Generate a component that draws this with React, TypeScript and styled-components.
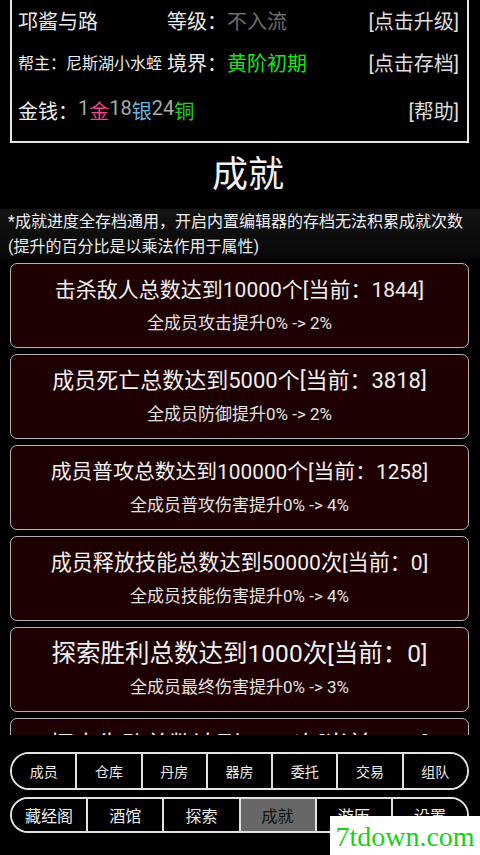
import styled, { createGlobalStyle } from "styled-components";

const GlobalStyle = createGlobalStyle`
    html, body {
        margin: 0;
        padding: 0;
        background: #000;
    }

    body {
        font-family: "Roboto", "Noto Sans CJK SC", sans-serif;
        color: #eee;
    }
`

const Screen = styled.div`
    width: 480px;
    height: 855px;
    background: #000;
    position: relative;
    overflow: hidden;
    display: flex;
    flex-direction: column;
`

const InfoBox = styled.div`
    margin: 0 11px 0 10px;
    height: 141px;
    border: 2px solid #e6e6e6;
    border-top: none;
    display: grid;
    grid-template-columns: 149px 1fr auto;
    grid-template-rows: 40px 44px 52px;
    padding: 0 8px 0 6px;
    align-items: center;
`

const InfoText = styled.span<{ $size?: number; $color?: string }>`
    font-size: ${(p) => p.$size ?? 20}px;
    color: ${(p) => p.$color ?? "#eaeaea"};
    white-space: nowrap;
`

const InfoAction = styled(InfoText)`
    justify-self: end;
    color: #dcdcdc;
`

const MoneyCell = styled.div`
    grid-column: 1 / 3;
    font-size: 20px;
    display: flex;
    white-space: nowrap;
`

const Coin = styled.span<{ $color: string }>`
    color: ${(p) => p.$color};
`

const PageTitle = styled.h1`
    margin: 0;
    height: 66px;
    line-height: 64px;
    padding-left: 16px;
    text-align: center;
    font-size: 36px;
    font-weight: 400;
    color: #f2f2f2;
`

const Note = styled.p`
    margin: 0;
    padding: 0 8px;
    font-size: 16px;
    line-height: 25px;
    color: #ececec;
    background: linear-gradient(#141414, #070707);
`

const ListArea = styled.div`
    margin-top: 4px;
    height: 472px;
    overflow: hidden;
    padding: 0 11px 0 10px;
    display: flex;
    flex-direction: column;
    gap: 6px;
`

const Card = styled.div`
    flex: none;
    height: 85px;
    box-sizing: border-box;
    border: 1px solid #b8b0b0;
    border-radius: 7px;
    background: #1e0000;
    padding: 11px 0 12px;
    display: flex;
    flex-direction: column;
    align-items: center;
    gap: 6px;
`

const CardTitle = styled.div<{ $size: number }>`
    font-size: ${(p) => p.$size}px;
    line-height: 30px;
    color: #f0f0f0;
    white-space: nowrap;
`

const CardReward = styled.div`
    font-size: 17px;
    line-height: 24px;
    color: #e2e2e2;
    white-space: nowrap;
`

const NavArea = styled.div`
    margin: 17px 11px 0 10px;
    display: flex;
    flex-direction: column;
    gap: 7px;
`

const NavRow = styled.div<{ $height: number }>`
    height: ${(p) => p.$height}px;
    box-sizing: border-box;
    border: 2px solid #e2e2e2;
    border-radius: ${(p) => p.$height / 2}px;
    overflow: hidden;
    display: flex;
`

const NavCell = styled.div<{ $size: number; $active?: boolean }>`
    flex: 1;
    display: flex;
    align-items: center;
    justify-content: center;
    font-size: ${(p) => p.$size}px;
    color: ${(p) => (p.$active ? "#111" : "#ececec")};
    background: ${(p) => (p.$active ? "#676767" : "#000")};

    & + & {
        border-left: 2px solid #e2e2e2;
    }
`

const Watermark = styled.div`
    position: absolute;
    left: 330px;
    top: 816px;
    width: 150px;
    height: 39px;
    background: #fff;
    display: flex;
    align-items: center;
    justify-content: center;
    padding-top: 2px;
    box-sizing: border-box;
    font-family: "Liberation Serif", serif;
    font-size: 28px;
    color: #16d116;
`

// title sizes follow the game's auto-fit text, so each line fills about the same width
const achievements = [
    { title: "击杀敌人总数达到10000个[当前：1844]", size: 21, reward: "全成员攻击提升0% -> 2%" },
    { title: "成员死亡总数达到5000个[当前：3818]", size: 22, reward: "全成员防御提升0% -> 2%" },
    { title: "成员普攻总数达到100000个[当前：1258]", size: 20.8, reward: "全成员普攻伤害提升0% -> 4%" },
    { title: "成员释放技能总数达到50000次[当前：0]", size: 21.1, reward: "全成员技能伤害提升0% -> 4%" },
    { title: "探索胜利总数达到1000次[当前：0]", size: 24.5, reward: "全成员最终伤害提升0% -> 3%" },
    { title: "探索失败总数达到1000次[当前：20]", size: 23.8, reward: "全成员生命提升0% -> 3%" },
];

const topNav = ["成员", "仓库", "丹房", "器房", "委托", "交易", "组队"];
const bottomNav = ["藏经阁", "酒馆", "探索", "成就", "游历", "设置"];

export default function App() {
    return (
        <Screen>
            <GlobalStyle />
            <InfoBox>
                <InfoText>邛酱与路</InfoText>
                <span>
                    <InfoText>等级：</InfoText>
                    <InfoText $color="#6e6e6e">不入流</InfoText>
                </span>
                <InfoAction>[点击升级]</InfoAction>

                <InfoText $size={16}>帮主：尼斯湖小水蛭</InfoText>
                <span>
                    <InfoText>境界：</InfoText>
                    <InfoText $color="#19e619">黄阶初期</InfoText>
                </span>
                <InfoAction>[点击存档]</InfoAction>

                <MoneyCell>
                    <span>金钱：</span>
                    <Coin $color="#a8a8a8">1</Coin>
                    <Coin $color="#e8488c">金</Coin>
                    <Coin $color="#a8a8a8">18</Coin>
                    <Coin $color="#6cb6dc">银</Coin>
                    <Coin $color="#a8a8a8">24</Coin>
                    <Coin $color="#1fd61f">铜</Coin>
                </MoneyCell>
                <InfoAction>[帮助]</InfoAction>
            </InfoBox>

            <PageTitle>成就</PageTitle>
            <Note>
                *成就进度全存档通用，开启内置编辑器的存档无法积累成就次数
                <br />
                (提升的百分比是以乘法作用于属性)
            </Note>

            <ListArea>
                {achievements.map((a, i) => (
                    <Card key={a.title}>
                        <CardTitle $size={a.size}>{a.title}</CardTitle>
                        {i < achievements.length - 1 && <CardReward>{a.reward}</CardReward>}
                    </Card>
                ))}
            </ListArea>

            <NavArea>
                <NavRow $height={38}>
                    {topNav.map((n) => (
                        <NavCell key={n} $size={14}>{n}</NavCell>
                    ))}
                </NavRow>
                <NavRow $height={36}>
                    {bottomNav.map((n) => (
                        <NavCell key={n} $size={16} $active={n === "成就"}>{n}</NavCell>
                    ))}
                </NavRow>
            </NavArea>

            <Watermark>7tdown.com</Watermark>
        </Screen>
    );
}
